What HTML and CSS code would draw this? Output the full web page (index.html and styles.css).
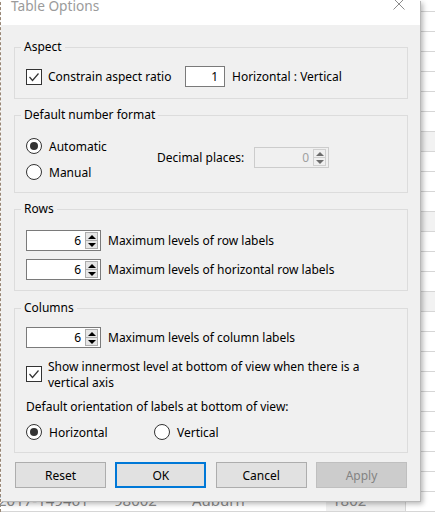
FILE: index.html
```html
<!DOCTYPE html>
<html lang="en">
<head>
<meta charset="utf-8">
<title>Table Options</title>
<link rel="stylesheet" href="styles.css">
</head>
<body>
<div class="sheet">
  <div class="sheet-row"></div>
  <div class="sheet-row"></div>
  <div class="sheet-row"></div>
  <div class="sheet-row"></div>
  <div class="sheet-row"></div>
  <div class="sheet-row"></div>
  <div class="sheet-row"></div>
  <div class="sheet-row shade"></div>
  <div class="sheet-row"></div>
  <div class="sheet-row"></div>
  <div class="sheet-row"></div>
  <div class="sheet-row shade"></div>
  <div class="sheet-row"></div>
  <div class="sheet-row"></div>
  <div class="sheet-row"></div>
  <div class="sheet-row shade"></div>
  <div class="sheet-row"></div>
  <div class="sheet-row"></div>
  <div class="sheet-row"></div>
  <div class="sheet-row"></div>
  <div class="sheet-row"></div>
  <div class="sheet-row"></div>
  <div class="sheet-row"></div>
  <div class="sheet-row"></div>
  <div class="sheet-row"></div>
  <div class="sheet-row data">
    <span class="cell c1">2017-149461</span>
    <span class="cell c2">98002</span>
    <span class="cell c3">Auburn</span>
    <span class="cell c4">1802</span>
  </div>
</div>

<div class="dialog">
  <div class="titlebar">
    <span class="title">Table Options</span>
    <svg class="close" viewBox="0 0 12 12" width="12" height="12"><path d="M0.5 0.5 L11.5 11.5 M11.5 0.5 L0.5 11.5" stroke="#8c8c8c" stroke-width="1" fill="none"/></svg>
  </div>
  <div class="dialog-body">
    <fieldset class="group g-aspect">
      <legend>Aspect</legend>
      <div class="group-body pad-aspect">
        <div class="row">
          <span class="checkbox"><svg viewBox="0 0 14 14" width="14" height="14"><path d="M2.5 7 L5.5 10.5 L11.5 3.5" stroke="#333" stroke-width="1.2" fill="none"/></svg></span>
          <span class="cb-label fixed-label">Constrain aspect ratio</span>
          <span class="textbox">1</span>
          <span class="after-box">Horizontal : Vertical</span>
        </div>
      </div>
    </fieldset>

    <fieldset class="group g-format">
      <legend>Default number format</legend>
      <div class="group-body pad-format">
        <div class="fmt">
          <div class="radio-col">
            <div class="radio-row"><span class="radio on"></span><span class="radio-label">Automatic</span></div>
            <div class="radio-row"><span class="radio"></span><span class="radio-label">Manual</span></div>
          </div>
          <div class="dec">
            <span class="dec-label">Decimal places:</span>
            <div class="spin disabled"><span class="spin-value">0</span><span class="spin-btns"><span class="spin-up"></span><span class="spin-down"></span></span></div>
          </div>
        </div>
      </div>
    </fieldset>

    <fieldset class="group g-rows">
      <legend>Rows</legend>
      <div class="group-body pad-rows">
        <div class="row">
          <div class="spin"><span class="spin-value">6</span><span class="spin-btns"><span class="spin-up"></span><span class="spin-down"></span></span></div>
          <span class="spin-label">Maximum levels of row labels</span>
        </div>
        <div class="row row-gap">
          <div class="spin"><span class="spin-value">6</span><span class="spin-btns"><span class="spin-up"></span><span class="spin-down"></span></span></div>
          <span class="spin-label">Maximum levels of horizontal row labels</span>
        </div>
      </div>
    </fieldset>

    <fieldset class="group g-cols">
      <legend>Columns</legend>
      <div class="group-body pad-cols">
        <div class="row">
          <div class="spin"><span class="spin-value">6</span><span class="spin-btns"><span class="spin-up"></span><span class="spin-down"></span></span></div>
          <span class="spin-label">Maximum levels of column labels</span>
        </div>
        <div class="row-top innermost">
          <span class="checkbox cb-offset"><svg viewBox="0 0 14 14" width="14" height="14"><path d="M2.5 7 L5.5 10.5 L11.5 3.5" stroke="#333" stroke-width="1.2" fill="none"/></svg></span>
          <span class="cb-label multi">Show innermost level at bottom of view when there is a<br>vertical axis</span>
        </div>
        <div class="orient-label">Default orientation of labels at bottom of view:</div>
        <div class="orient-row">
          <div class="radio-row orient-item"><span class="radio on"></span><span class="radio-label">Horizontal</span></div>
          <div class="radio-row"><span class="radio"></span><span class="radio-label">Vertical</span></div>
        </div>
      </div>
    </fieldset>

    <div class="buttons">
      <button class="btn" type="button">Reset</button>
      <button class="btn btn-default" type="button">OK</button>
      <button class="btn" type="button">Cancel</button>
      <button class="btn btn-disabled" type="button">Apply</button>
    </div>
  </div>
</div>
</body>
</html>
```

FILE: styles.css
```css
* { box-sizing: border-box; }

html, body {
  margin: 0;
  padding: 0;
}

body {
  width: 435px;
  height: 513px;
  overflow: hidden;
  position: relative;
  background: #ffffff;
  font-family: "Noto Sans", "Open Sans", sans-serif;
  font-size: 12px;
  color: #000000;
}

/* background spreadsheet */
.sheet {
  position: absolute;
  left: 0;
  top: -8px;
  width: 435px;
  border-left: 1px dashed #9c8a78;
}

.sheet-row {
  height: 20px;
  border-bottom: 1px solid #d6d6d6;
}

.sheet-row.shade {
  background: #f2f2f2;
}

.sheet-row.data {
  display: flex;
  font-size: 15px;
  line-height: 17px;
  color: #8a8a8a;
}

.cell {
  display: block;
  white-space: nowrap;
  overflow: hidden;
}

.c1 { width: 115px; margin-left: -3px; }
.c2 { width: 79px; padding-left: 1px; }
.c3 { width: 134px; }
.c4 {
  width: 80px;
  padding-left: 6px;
  background: #f0f0f0;
  border-right: 1px solid #d6d6d6;
}

/* dialog */
.dialog {
  position: absolute;
  left: 1px;
  top: 0;
  width: 419px;
  background: #f0f0f0;
  box-shadow: 1px 1px 0 #b8b8b8, 3px 3px 5px rgba(0, 0, 0, 0.28);
}

.titlebar {
  position: relative;
  height: 25px;
  background: #ffffff;
  padding-left: 10px;
  overflow: hidden;
}

.title {
  display: block;
  margin-top: -2px;
  font-size: 13.7px;
  line-height: 16px;
  color: #9b9b9b;
}

.close {
  position: absolute;
  right: 15px;
  top: -2px;
  display: block;
}

.dialog-body {
  padding: 14px 12px 13px 13px;
}

.group {
  margin: 0;
  padding: 0;
  min-width: 0;
  border: 1px solid #dcdcdc;
}

.group legend {
  margin-left: 6px;
  padding: 0 3px;
  font-size: 12px;
  line-height: 16px;
}

.g-format { margin-top: 8px; }
.g-rows { margin-top: 8px; }
.g-cols { margin-top: 9px; }

.group-body { padding-left: 11px; padding-right: 11px; }
.pad-aspect { padding-top: 11px; padding-bottom: 11px; }
.pad-format { padding-top: 13px; padding-bottom: 10px; }
.pad-rows { padding-top: 13px; padding-bottom: 10px; }
.pad-cols { padding-top: 11px; padding-bottom: 10px; }

.row {
  display: flex;
  align-items: center;
  height: 21px;
}

.row-gap { margin-top: 8px; }

.row-top {
  display: flex;
  align-items: flex-start;
}

/* checkbox */
.checkbox {
  flex: none;
  width: 16px;
  height: 16px;
  border: 1px solid #333333;
  background: #ffffff;
  display: block;
}

.checkbox svg { display: block; }

.cb-label {
  margin-left: 6px;
  line-height: 16px;
  white-space: nowrap;
}

.fixed-label {
  flex: none;
  width: 137px;
}

.textbox {
  flex: none;
  width: 40px;
  height: 21px;
  border: 1px solid #7a7a7a;
  background: #ffffff;
  text-align: right;
  padding-right: 6px;
  line-height: 19px;
}

.after-box { margin-left: 7px; white-space: nowrap; }

/* radios */
.radio-row {
  display: flex;
  align-items: center;
  height: 20px;
}

.radio {
  flex: none;
  width: 16px;
  height: 16px;
  border: 1px solid #333333;
  border-radius: 50%;
  background: #ffffff;
  display: flex;
  align-items: center;
  justify-content: center;
}

.radio.on::after {
  content: "";
  width: 8px;
  height: 8px;
  border-radius: 50%;
  background: #333333;
}

.radio-label { margin-left: 7px; white-space: nowrap; }

/* number format */
.fmt {
  display: flex;
  align-items: flex-start;
}

.radio-col {
  width: 131px;
  display: flex;
  flex-direction: column;
  gap: 6px;
}

.dec {
  display: flex;
  align-items: center;
  margin-top: 11px;
}

.dec-label {
  width: 97px;
  white-space: nowrap;
}

/* spinner */
.spin {
  flex: none;
  display: flex;
  width: 75px;
  height: 21px;
  border: 1px solid #7a7a7a;
  background: #ffffff;
}

.spin-value {
  flex: 1;
  text-align: right;
  padding-right: 4px;
  line-height: 19px;
}

.spin-btns {
  flex: none;
  width: 13px;
  margin: 1px 2px 1px 0;
  display: flex;
  flex-direction: column;
}

.spin-up, .spin-down {
  flex: 1;
  background: #e6e6e6;
  border: 1px solid #adadad;
  display: flex;
  align-items: center;
  justify-content: center;
}

.spin-down { border-top: none; }

.spin-up::before {
  content: "";
  border-left: 4px solid transparent;
  border-right: 4px solid transparent;
  border-bottom: 4px solid #000000;
}

.spin-down::before {
  content: "";
  border-left: 4px solid transparent;
  border-right: 4px solid transparent;
  border-top: 4px solid #000000;
}

.spin.disabled {
  border-color: #cccccc;
  background: #f0f0f0;
  color: #a0a0a0;
}

.spin.disabled .spin-up,
.spin.disabled .spin-down {
  background: #f0f0f0;
  border-color: #d0d0d0;
}

.spin.disabled .spin-up::before { border-bottom-color: #6d6d6d; }
.spin.disabled .spin-down::before { border-top-color: #6d6d6d; }

.spin-label {
  margin-left: 7px;
  white-space: nowrap;
}

/* columns group */
.innermost { margin-top: 11px; }
.cb-offset { margin-top: 7px; }
.multi { white-space: normal; }

.orient-label {
  margin-top: 8px;
  line-height: 16px;
}

.orient-row {
  display: flex;
  margin-top: 7px;
}

.orient-item { width: 128px; }

/* buttons */
.buttons {
  display: flex;
  justify-content: space-between;
  margin-top: 9px;
  padding: 0 1px;
}

.btn {
  width: 91px;
  height: 26px;
  margin: 0;
  padding: 0;
  background: #e1e1e1;
  border: 1px solid #adadad;
  border-radius: 0;
  font-family: "Noto Sans", "Open Sans", sans-serif;
  font-size: 12px;
  color: #000000;
}

.btn-default {
  border: 2px solid #0078d7;
}

.btn-disabled {
  background: #cccccc;
  border-color: #bfbfbf;
  color: #838383;
}
```
